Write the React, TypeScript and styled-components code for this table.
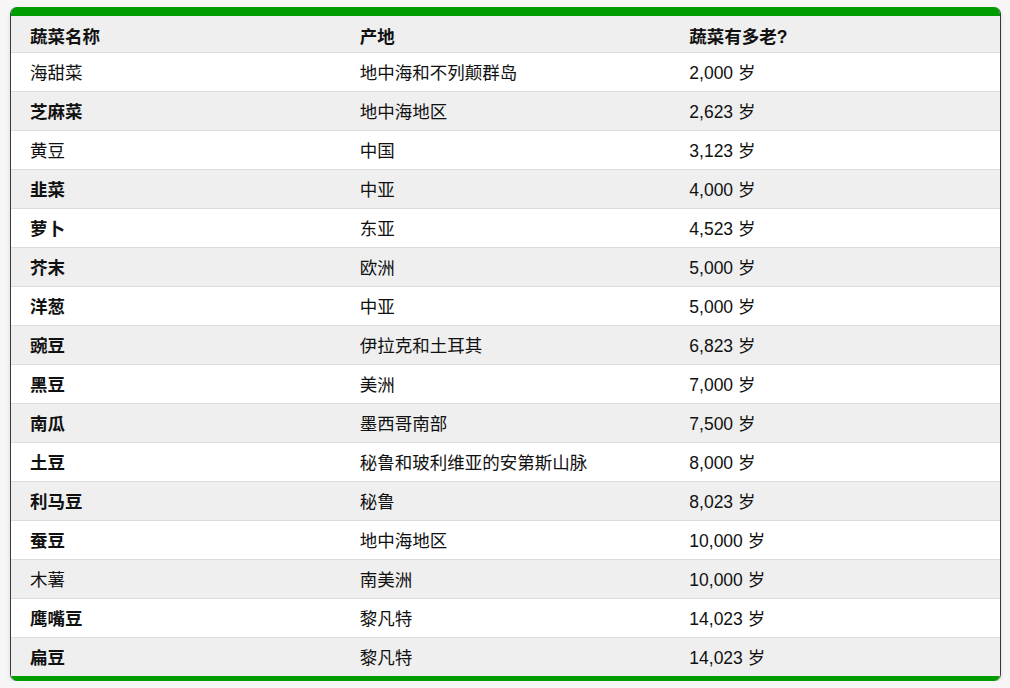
import styled, { createGlobalStyle } from "styled-components";

const rows = [
  { name: "海甜菜", origin: "地中海和不列颠群岛", age: "2,000 岁", strong: false },
  { name: "芝麻菜", origin: "地中海地区", age: "2,623 岁", strong: true },
  { name: "黄豆", origin: "中国", age: "3,123 岁", strong: false },
  { name: "韭菜", origin: "中亚", age: "4,000 岁", strong: true },
  { name: "萝卜", origin: "东亚", age: "4,523 岁", strong: true },
  { name: "芥末", origin: "欧洲", age: "5,000 岁", strong: true },
  { name: "洋葱", origin: "中亚", age: "5,000 岁", strong: true },
  { name: "豌豆", origin: "伊拉克和土耳其", age: "6,823 岁", strong: true },
  { name: "黑豆", origin: "美洲", age: "7,000 岁", strong: true },
  { name: "南瓜", origin: "墨西哥南部", age: "7,500 岁", strong: true },
  { name: "土豆", origin: "秘鲁和玻利维亚的安第斯山脉", age: "8,000 岁", strong: true },
  { name: "利马豆", origin: "秘鲁", age: "8,023 岁", strong: true },
  { name: "蚕豆", origin: "地中海地区", age: "10,000 岁", strong: true },
  { name: "木薯", origin: "南美洲", age: "10,000 岁", strong: false },
  { name: "鹰嘴豆", origin: "黎凡特", age: "14,023 岁", strong: true },
  { name: "扁豆", origin: "黎凡特", age: "14,023 岁", strong: true }
];

const GlobalStyle = createGlobalStyle`
  html, body {
    margin: 0;
    background: #f6f6f6;
  }

  body {
    font-family: "Liberation Sans", "Noto Sans CJK SC", sans-serif;
    color: #111111;
  }
`;

const Page = styled.div`
  padding: 7px 9px 0 10px;
`;

const Card = styled.div`
  border: 1px solid #3a3a3a;
  border-top: 0;
  border-bottom: 0;
  border-radius: 7px;
  overflow: hidden;
  background: #ffffff;
  box-shadow: 0 2px 4px rgb(0 0 0 / 12%);
`;

const Table = styled.table`
  width: 100%;
  border-collapse: collapse;
  table-layout: fixed;
  border-top: 9px solid #019c02;
  border-bottom: 5px solid #019c02;
  font-size: 17.5px;
`;

const HeadCell = styled.th`
  height: 34px;
  padding: 2px 19px 0;
  text-align: left;
  font-weight: 700;
  background: #efefef;
  border-bottom: 1px solid #dcdcdc;
`;

const Row = styled.tr<{ $striped: boolean }>`
  background: ${({ $striped }) => ($striped ? "#efefef" : "#ffffff")};
  border-bottom: 1px solid #dcdcdc;

  &:last-child {
    border-bottom: 0;
  }
`;

const Cell = styled.td<{ $strong?: boolean }>`
  height: 35px;
  padding: 3px 19px 0;
  line-height: 1;
  font-weight: ${({ $strong }) => ($strong ? 700 : 400)};
`;

export default function App() {
  return (
    <Page>
      <GlobalStyle />
      <Card>
        <Table>
          <thead>
            <tr>
              <HeadCell>蔬菜名称</HeadCell>
              <HeadCell>产地</HeadCell>
              <HeadCell>蔬菜有多老?</HeadCell>
            </tr>
          </thead>
          <tbody>
            {rows.map((row, i) => (
              <Row key={row.name} $striped={i % 2 === 1}>
                <Cell $strong={row.strong}>{row.name}</Cell>
                <Cell>{row.origin}</Cell>
                <Cell>{row.age}</Cell>
              </Row>
            ))}
          </tbody>
        </Table>
      </Card>
    </Page>
  );
}
